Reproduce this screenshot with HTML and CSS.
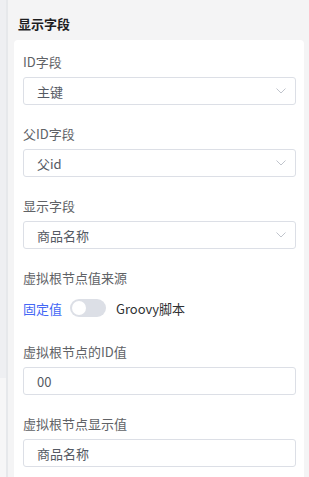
FILE: index.html
```html
<!DOCTYPE html>
<html lang="zh-CN">

<head>
    <meta charset="UTF-8" />
    <meta name="viewport" content="width=device-width, initial-scale=1.0" />
    <title>显示字段</title>
    <link rel="stylesheet" href="styles.css">
</head>

<body>
    <div class="page">
        <div class="side-strip"></div>

        <section class="panel">
            <h3 class="panel-title">显示字段</h3>

            <div class="card">
                <div class="form-item">
                    <label class="form-label">ID字段</label>
                    <div class="select">
                        <span class="select-value">主键</span>
                        <svg class="arrow" width="10" height="6" viewBox="0 0 10 6">
                            <path d="M0.5 0.5 L5 5 L9.5 0.5" fill="none" stroke="#c0c4cc" stroke-width="1" />
                        </svg>
                    </div>
                </div>

                <div class="form-item">
                    <label class="form-label">父ID字段</label>
                    <div class="select">
                        <span class="select-value">父id</span>
                        <svg class="arrow" width="10" height="6" viewBox="0 0 10 6">
                            <path d="M0.5 0.5 L5 5 L9.5 0.5" fill="none" stroke="#c0c4cc" stroke-width="1" />
                        </svg>
                    </div>
                </div>

                <div class="form-item">
                    <label class="form-label">显示字段</label>
                    <div class="select">
                        <span class="select-value">商品名称</span>
                        <svg class="arrow" width="10" height="6" viewBox="0 0 10 6">
                            <path d="M0.5 0.5 L5 5 L9.5 0.5" fill="none" stroke="#c0c4cc" stroke-width="1" />
                        </svg>
                    </div>
                </div>

                <div class="form-item">
                    <label class="form-label">虚拟根节点值来源</label>
                    <div class="switch-row">
                        <span class="switch-text active">固定值</span>
                        <span class="switch">
                            <span class="switch-knob"></span>
                        </span>
                        <span class="switch-text">Groovy脚本</span>
                    </div>
                </div>

                <div class="form-item">
                    <label class="form-label">虚拟根节点的ID值</label>
                    <div class="input">00</div>
                </div>

                <div class="form-item">
                    <label class="form-label">虚拟根节点显示值</label>
                    <div class="input">商品名称</div>
                </div>
            </div>
        </section>
    </div>
</body>

</html>
```

FILE: styles.css
```css
* {
    box-sizing: border-box;
}

body {
    margin: 0;
    font-family: "Noto Sans CJK SC", "Noto Sans", Arial, sans-serif;
    font-size: 13px;
    background: #f4f4f5;
    overflow: hidden;
}

.page {
    display: flex;
    height: 477px;
}

.side-strip {
    width: 8px;
    flex: 0 0 8px;
    background: linear-gradient(to bottom, #eeeff2 378px, #f6f6f7 378px);
    border-right: 2px solid #e6e8eb;
}

.panel {
    flex: 1;
    padding: 0 5px 0 6px;
}

.panel-title {
    margin: 0;
    padding: 14px 0 0 4px;
    height: 40px;
    font-size: 13px;
    line-height: 20px;
    font-weight: bold;
    color: #1d1d1f;
}

.card {
    background: #fff;
    border-radius: 4px;
    padding: 12px 8px 20px 9px;
}

.form-item {
    margin-bottom: 19px;
}

.form-label {
    display: block;
    line-height: 20px;
    margin-bottom: 5px;
    color: #606266;
}

.select,
.input {
    display: flex;
    align-items: center;
    height: 28px;
    padding: 0 9px 0 13px;
    border: 1px solid #dcdfe6;
    border-radius: 3px;
    color: #555a63;
    background: #fff;
}

.select-value {
    flex: 1;
}

.arrow {
    display: block;
}

.switch-row {
    display: flex;
    align-items: center;
    height: 30px;
}

.switch-text {
    color: #303133;
}

.switch-text.active {
    color: #4367f5;
}

.switch {
    position: relative;
    width: 36px;
    height: 18px;
    margin: 0 10px 0 8px;
    border-radius: 9px;
    background: #dcdfe6;
}

.switch-knob {
    position: absolute;
    top: 2px;
    left: 2px;
    width: 14px;
    height: 14px;
    border-radius: 50%;
    background: #fff;
}
```
